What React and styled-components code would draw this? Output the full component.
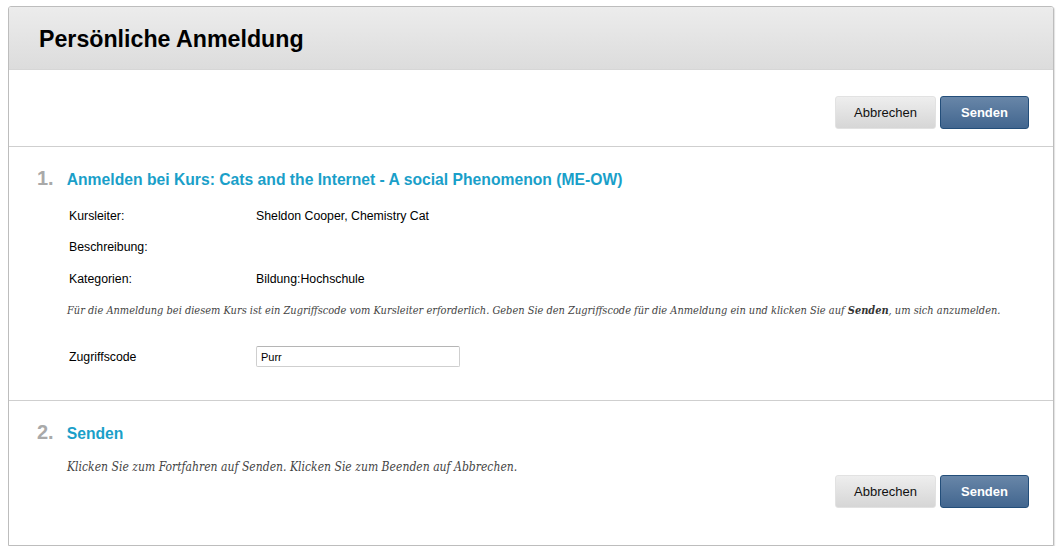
import React from "react";
import styled, { createGlobalStyle } from "styled-components";

const Global = createGlobalStyle`
  html, body { margin: 0; padding: 0; background: #fff; }
  body { font-family: Arial, "Liberation Sans", sans-serif; color: #000; }
`;

const Page = styled.div`
  padding: 6px 9px 0 8px;
`;

const Panel = styled.div`
  border: 1px solid #bdbdbd;
  border-radius: 3px 3px 0 0;
  box-shadow: 1px 1px 1px rgba(0,0,0,0.12);
  overflow: hidden;
`;

const Header = styled.div`
  height: 62px;
  background: linear-gradient(#ececec, #dcdcdc);
  border-bottom: 1px solid #d6d6d6;
  display: flex;
  align-items: center;
  padding-left: 30px;
  h1 {
    margin: 0;
    font-size: 23.2px;
    font-weight: bold;
    color: #000;
    position: relative;
    top: 1px;
  }
`;

const ButtonBar = styled.div`
  display: flex;
  justify-content: flex-end;
  gap: 4px;
  padding: ${p => p.$pad || "26px 24px 0 0"};
  height: ${p => p.$h || "77px"};
  box-sizing: border-box;
  border-bottom: ${p => (p.$line ? "1px solid #cfcfcf" : "none")};
`;

const Button = styled.button`
  height: 33px;
  width: ${p => (p.$primary ? "89px" : "101px")};
  border-radius: 3px;
  font-family: Arial, "Liberation Sans", sans-serif;
  font-size: 13px;
  cursor: pointer;
  border: 1px solid ${p => (p.$primary ? "#234e7a" : "#e2e2e2")};
  background: ${p =>
    p.$primary
      ? "linear-gradient(#6886a8, #42668f)"
      : "linear-gradient(#eeeeee, #d6d6d6)"};
  color: ${p => (p.$primary ? "#fff" : "#111")};
  font-weight: ${p => (p.$primary ? "bold" : "normal")};
`;

const Section = styled.div`
  padding: 20px 0 0 28px;
  border-bottom: ${p => (p.$line ? "1px solid #cfcfcf" : "none")};
  height: ${p => p.$h};
  box-sizing: border-box;
`;

const StepHead = styled.div`
  display: flex;
  align-items: baseline;
  gap: 13px;
  margin-bottom: ${p => p.$mb || "10px"};
`;

const StepNum = styled.span`
  font-size: 20px;
  font-weight: bold;
  color: #a9a9a9;
`;

const StepTitle = styled.h2`
  margin: 0;
  font-size: 15.7px;
  font-weight: bold;
  color: #1a9fc9;
`;

const Rows = styled.div`
  padding-left: 32px;
  margin-top: ${p => p.$mt || "0"};
`;

const Row = styled.div`
  display: grid;
  grid-template-columns: 187px 1fr;
  align-items: center;
  font-size: 12.3px;
  height: ${p => p.$h || "31.5px"};
`;

const Note = styled.p`
  margin: ${p => p.$m || "0 0 0 30px"};
  font-family: "DejaVu Serif Condensed", "DejaVu Serif", Georgia, serif;
  font-stretch: condensed;
  font-style: italic;
  font-size: ${p => p.$size || "10.95px"};
  color: #444;
  b { font-weight: bold; color: #333; }
`;

const Input = styled.input`
  width: 204px;
  height: 21px;
  box-sizing: border-box;
  border: 1px solid #cfcfcf;
  border-top-color: #b5b5b5;
  border-radius: 2px;
  font-family: Arial, "Liberation Sans", sans-serif;
  font-size: 11px;
  padding: 0 4px;
  outline: none;
`;

export default function App() {
  return (
    <Page>
      <Global />
      <Panel>
        <Header>
          <h1>Persönliche Anmeldung</h1>
        </Header>
        <ButtonBar $line>
          <Button>Abbrechen</Button>
          <Button $primary>Senden</Button>
        </ButtonBar>
        <Section $line $h="254px">
          <StepHead>
            <StepNum>1.</StepNum>
            <StepTitle>Anmelden bei Kurs: Cats and the Internet - A social Phenomenon (ME-OW)</StepTitle>
          </StepHead>
          <Rows>
            <Row>
              <span>Kursleiter:</span>
              <span>Sheldon Cooper, Chemistry Cat</span>
            </Row>
            <Row>
              <span>Beschreibung:</span>
              <span></span>
            </Row>
            <Row>
              <span>Kategorien:</span>
              <span>Bildung:Hochschule</span>
            </Row>
          </Rows>
          <Note $m="9px 0 0 30px">
            Für die Anmeldung bei diesem Kurs ist ein Zugriffscode vom Kursleiter erforderlich. Geben Sie den Zugriffscode für die Anmeldung ein und klicken Sie auf <b>Senden</b>, um sich anzumelden.
          </Note>
          <Rows $mt="25px">
            <Row $h="30px">
              <span>Zugriffscode</span>
              <Input defaultValue="Purr" />
            </Row>
          </Rows>
        </Section>
        <Section $h="69px">
          <StepHead $mb="16px">
            <StepNum>2.</StepNum>
            <StepTitle>Senden</StepTitle>
          </StepHead>
          <Note $size="12.05px">
            Klicken Sie zum Fortfahren auf Senden. Klicken Sie zum Beenden auf Abbrechen.
          </Note>
        </Section>
        <ButtonBar $pad="5px 24px 0 0" $h="75px">
          <Button>Abbrechen</Button>
          <Button $primary>Senden</Button>
        </ButtonBar>
      </Panel>
    </Page>
  );
}
